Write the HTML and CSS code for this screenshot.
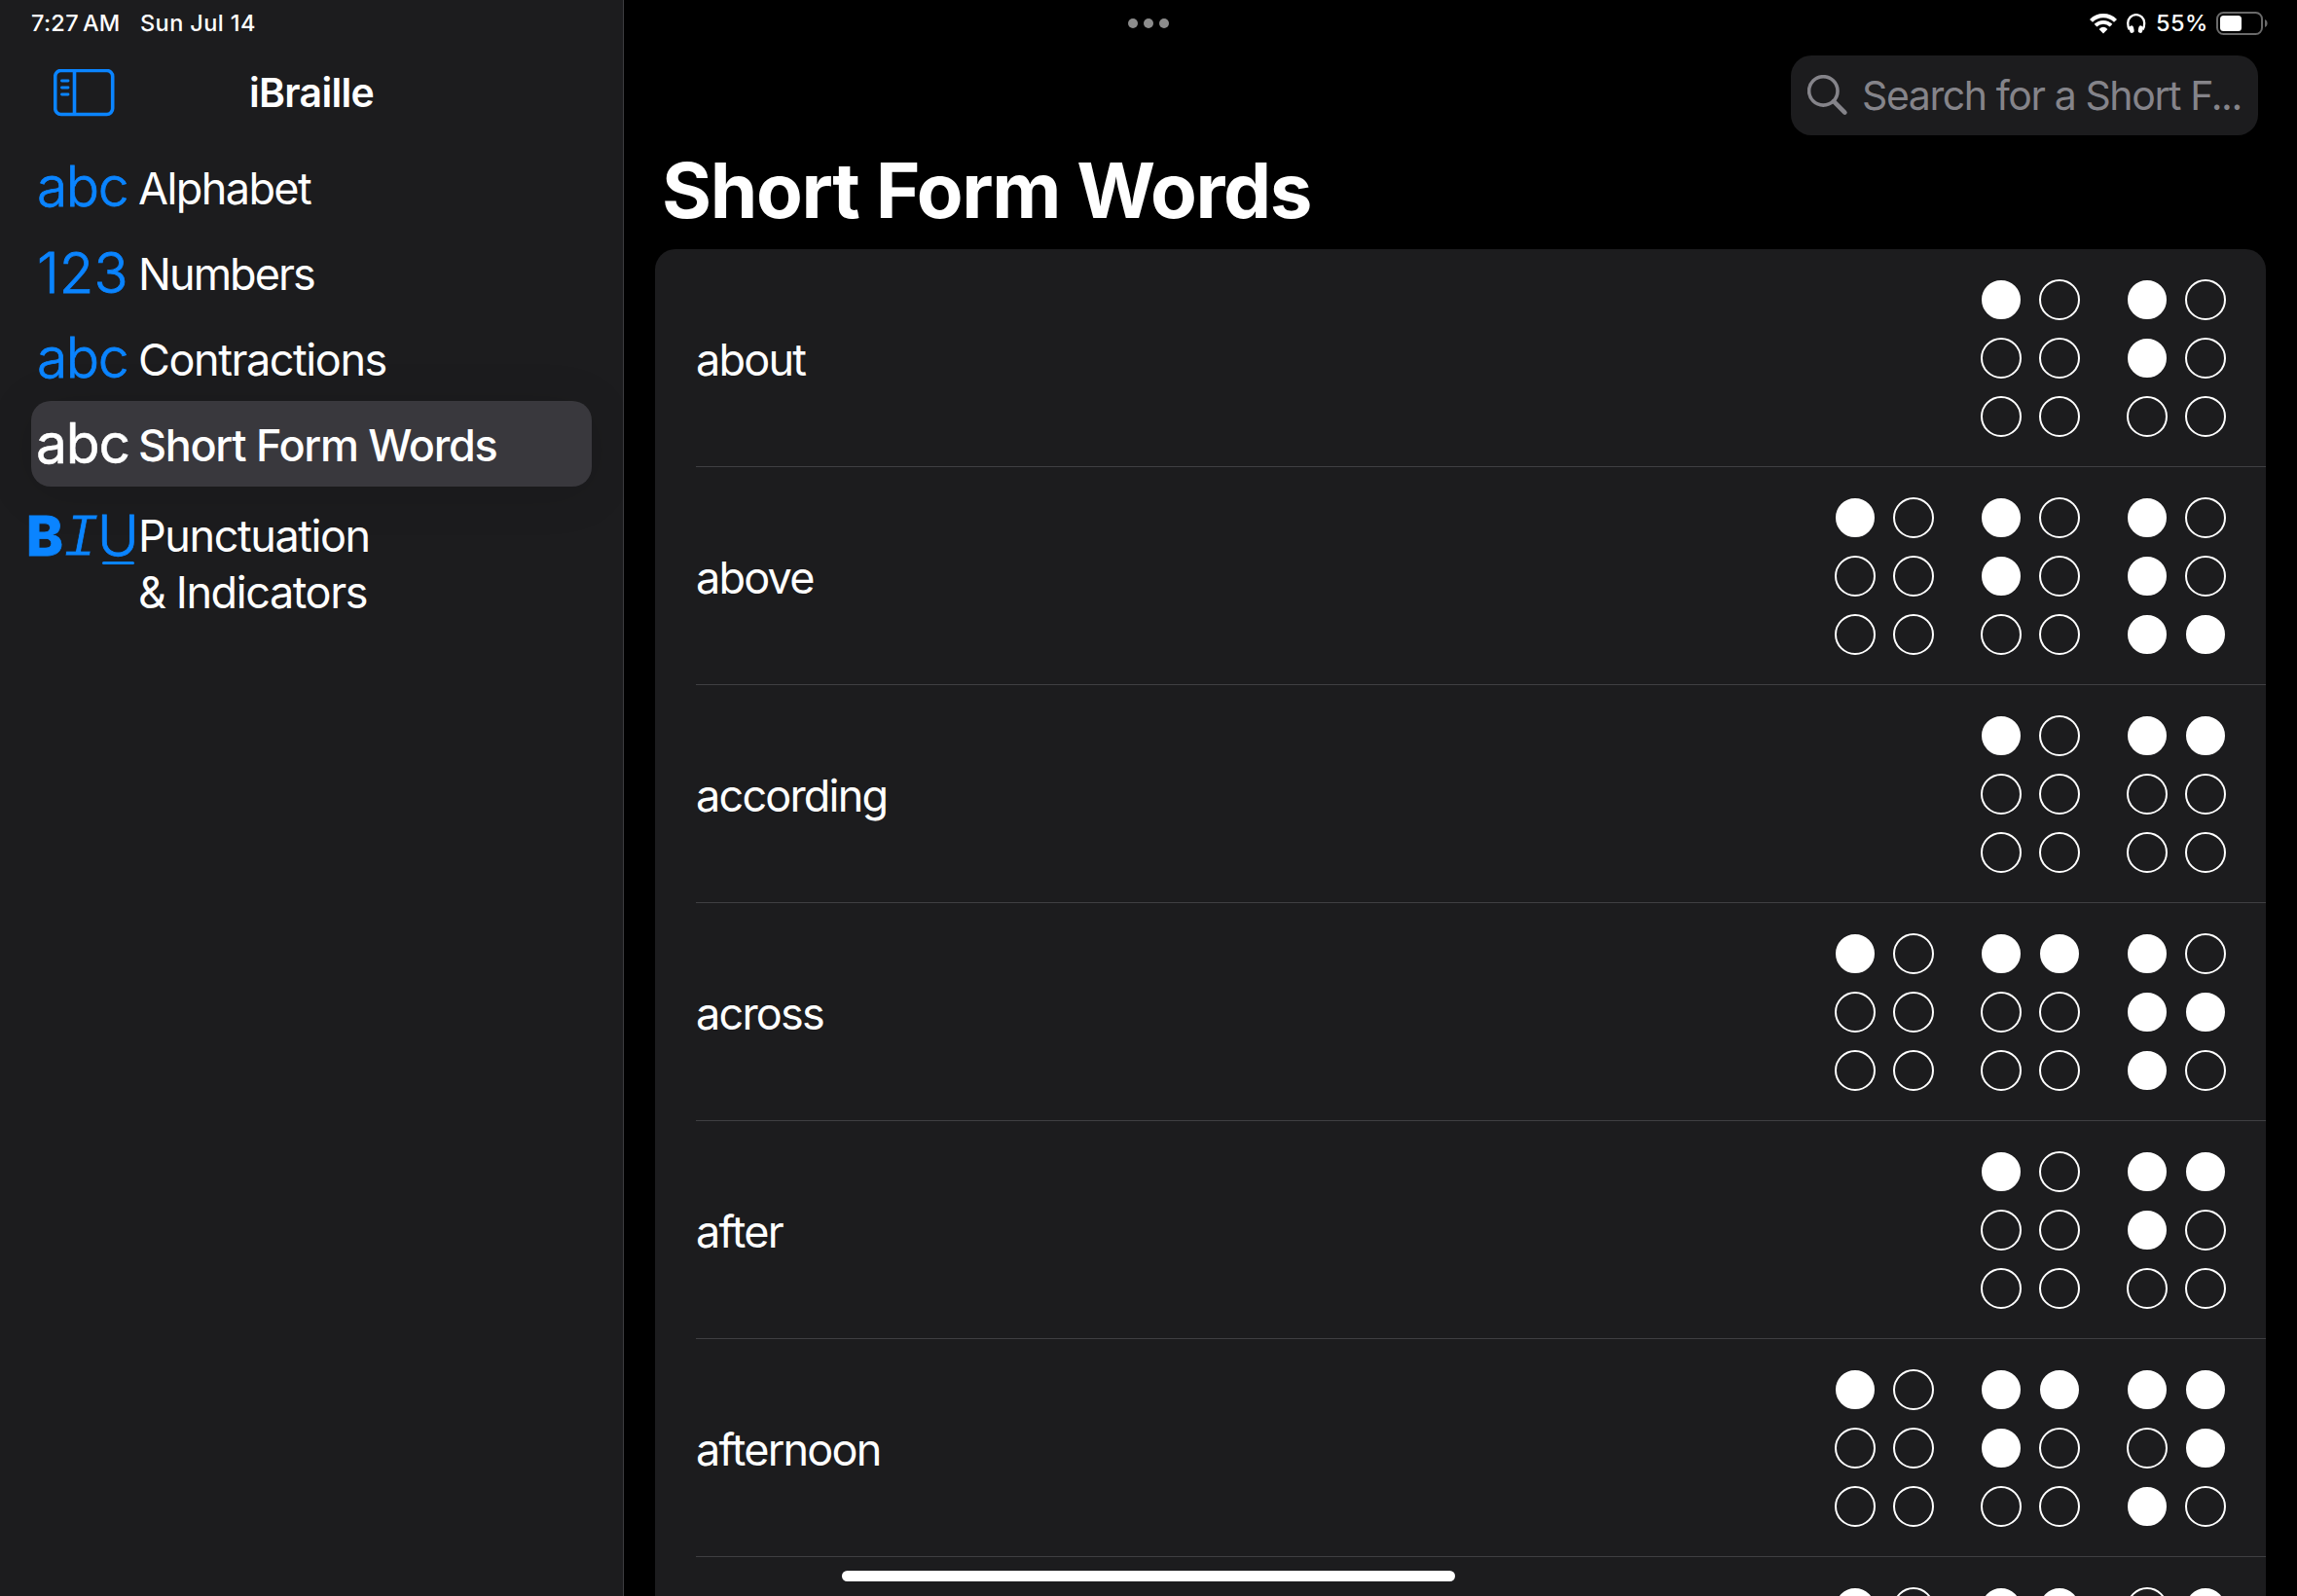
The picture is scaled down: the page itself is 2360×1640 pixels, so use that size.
FILE: index.html
```
<!DOCTYPE html>
<html lang="en">
<head>
<meta charset="utf-8">
<title>iBraille</title>
<link rel="stylesheet" href="styles.css">
</head>
<body>
<div class="app">
  <aside class="sidebar">
    <div class="status status-left">
      <span class="time">7:27<span class="ampm">AM</span></span>
      <span class="date">Sun Jul 14</span>
    </div>
    <header class="sidebar-bar">
      <svg class="toggle" width="64" height="50" viewBox="0 0 64 50" fill="none" stroke="#0a84ff">
        <rect x="1.7" y="1.5" width="59" height="45" rx="6" stroke-width="3.6"/>
        <path d="M21.5 2v45" stroke-width="3.6"/>
        <path d="M8.5 12h6.5M8.5 19h6.5M8.5 26h6.5" stroke-width="2.9" stroke-linecap="round"/>
      </svg>
      <h2 class="app-name">iBraille</h2>
    </header>
    <nav class="menu">
      <a class="item"><span class="glyph abc">abc</span><span class="label alphabet">Alphabet</span></a>
      <a class="item"><span class="glyph num">123</span><span class="label numbers">Numbers</span></a>
      <a class="item"><span class="glyph abc">abc</span><span class="label">Contractions</span></a>
      <a class="item selected"><span class="glyph abc">abc</span><span class="label">Short Form Words</span></a>
      <a class="item tall"><span class="glyph biu"><b>B</b><i>I</i><u>U</u></span><span class="label">Punctuation<br>&amp; Indicators</span></a>
    </nav>
  </aside>

  <main class="detail">
    <div class="status status-right">
      <span class="multitask"><span></span><span></span><span></span></span>
      <span class="indicators">
        <svg class="wifi" width="28" height="21" viewBox="0 0 28 21" fill="none" stroke="#fff">
          <path d="M1.5 7.4A17.5 17.5 0 0 1 26.5 7.4" stroke-width="4.2"/>
          <path d="M6 12.2A11.2 11.2 0 0 1 22 12.2" stroke-width="3.8"/>
          <path d="M14 20.4L9.6 16Q14 11.7 18.4 16Z" fill="#fff" stroke="none"/>
        </svg>
        <svg class="phones" width="20" height="21" viewBox="0 0 20 21" fill="none" stroke="#fff">
          <path d="M2.8 16.5C1.6 14.5 1.2 12.3 1.2 9.8A8.4 8.6 0 0 1 18.2 9.8C18.2 12.3 17.8 14.5 16.6 16.5" stroke-width="2.3"/>
          <path d="M4.8 14.7L5.4 17.6M14.6 14.7L14 17.6" stroke-width="4.6" stroke-linecap="round"/>
        </svg>
        <span class="percent">55%</span>
        <svg class="battery" width="54" height="24" viewBox="0 0 54 24">
          <rect x="1" y="1" width="46" height="22" rx="6.5" fill="none" stroke="#6a6a6a" stroke-width="2"/>
          <rect x="4" y="4" width="22" height="16" rx="3.5" fill="#fff"/>
          <path d="M50 8C53.4 9.2 53.4 14.8 50 16Z" fill="#6a6a6a"/>
        </svg>
      </span>
    </div>
    <div class="toolbar">
      <div class="search">
        <svg width="42" height="42" viewBox="0 0 42 42" fill="none" stroke="#85848a">
          <circle cx="16.3" cy="16.4" r="14.7" stroke-width="3.6"/>
          <path d="M27 27.2L38.4 38.6" stroke-width="4.6" stroke-linecap="round"/>
        </svg>
        <span>Search for a Short F...</span>
      </div>
    </div>
    <h1 class="title">Short Form Words</h1>
    <section class="card" id="words"></section>
  </main>
  <div class="home-indicator"></div>
</div>
<script src="words.js"></script>
</body>
</html>
```
FILE: styles.css
```
* { box-sizing: border-box; }

body {
  margin: 0;
  background: #000;
  color: #fff;
  font-family: Inter, "Liberation Sans", sans-serif;
}

.app {
  position: relative;
  display: flex;
  width: 2360px;
  height: 1640px;
  overflow: hidden;
}

/* Sidebar */
.sidebar {
  flex: none;
  width: 641px;
  background: #1c1c1e;
  border-right: 1px solid #3d3d40;
}

.status {
  display: flex;
  align-items: center;
  height: 48px;
  font-size: 23.5px;
  font-weight: 500;
  line-height: 28px;
  white-space: nowrap;
}

.status-left { padding-left: 32px; height: 47px; }
.time { width: 112px; letter-spacing: 0.3px; }
.ampm { margin-left: 4px; }
.date { letter-spacing: 0.41px; }

.sidebar-bar {
  display: flex;
  align-items: center;
  height: 101px;
  padding: 1px 0 4px 55px;
}

.toggle { flex: none; display: block; }

.app-name {
  margin: -2px 0 0 137px;
  font-size: 41px;
  font-weight: 600;
  letter-spacing: -0.7px;
}

.menu { padding: 0 32px; }

.item {
  display: flex;
  align-items: center;
  height: 88px;
  border-radius: 20px;
  font-size: 45px;
  letter-spacing: -1.43px;
  white-space: nowrap;
}

.label { padding-top: 2px; }

.glyph {
  flex: none;
  width: 110px;
  padding-left: 6px;
  color: #0a84ff;
  font-weight: 300;
  line-height: 88px;
  -webkit-text-stroke: 0.8px currentColor;
}

.abc { font-size: 57px; letter-spacing: -1.5px; }
.num { font-size: 58px; letter-spacing: 0; }
.alphabet { letter-spacing: -1.6px; }
.numbers { letter-spacing: -1.94px; }

.selected {
  background: #39383d;
  font-weight: 500;
  letter-spacing: -1.32px;
  box-shadow: 0 6px 50px rgba(0, 0, 0, 0.12);
}

.selected .glyph {
  padding-left: 5px;
  color: #fff;
  font-weight: 400;
  letter-spacing: -1.2px;
  -webkit-text-stroke-width: 0.5px;
}

.tall {
  align-items: flex-start;
  height: 156px;
  padding-top: 20px;
  line-height: 58px;
}

.biu {
  display: flex;
  width: 115px;
  margin-left: -5px;
  padding: 0;
  font-size: 58px;
  letter-spacing: 0;
  line-height: 61px;
}

.biu b { width: 39px; font-size: 57px; font-weight: 800; }

.biu i {
  width: 35px;
  margin-left: -1px;
  margin-right: 1px;
  padding-top: 4px;
  font-family: "Liberation Mono", monospace;
  font-size: 63px;
  font-weight: 400;
  -webkit-text-stroke: 0.8px #1c1c1e;
}

.biu u { position: relative; text-decoration: none; }

.biu u::after {
  content: "";
  position: absolute;
  left: 5px;
  top: 57px;
  width: 33px;
  height: 3px;
  border-radius: 2px;
  background: #0a84ff;
}

/* Detail pane */
.detail {
  display: flex;
  flex-direction: column;
  width: 1719px;
  padding: 0 32px;
}

.status-right {
  flex: none;
  justify-content: space-between;
  margin-right: -3px;
}

.multitask { display: flex; gap: 6px; margin-left: 486px; }
.multitask span { width: 10px; height: 10px; border-radius: 50%; background: #8c8c8c; }

.indicators { display: flex; align-items: center; }
.phones { margin-left: 10px; }
.percent { width: 62px; height: 29px; margin-left: 10px; letter-spacing: 0.5px; }

.toolbar {
  flex: none;
  display: flex;
  justify-content: flex-end;
  padding: 9px 8px 0 0;
}

.search {
  display: flex;
  align-items: center;
  width: 480px;
  height: 82px;
  padding-left: 17px;
  gap: 14px;
  border-radius: 21px;
  background: #1c1c1e;
  color: #85848a;
  font-size: 41px;
  letter-spacing: -1.4px;
  white-space: nowrap;
}

.title {
  flex: none;
  height: 117px;
  margin: 0;
  padding-left: 7px;
  font-size: 78px;
  font-weight: 700;
  line-height: 114px;
  letter-spacing: -1.35px;
}

.card {
  flex: none;
  border-radius: 21px;
  background: #1c1c1e;
}

.row {
  display: flex;
  align-items: center;
  justify-content: space-between;
  height: 224px;
  margin-left: 42px;
  padding: 1px 42px 0 0;
  border-bottom: 1px solid #3f3f42;
}

.word { padding-top: 2px; font-size: 45px; letter-spacing: -1.8px; }
.cells { display: flex; gap: 50px; margin-left: auto; }

.cell {
  display: grid;
  grid-template: repeat(3, 40px) / repeat(2, 40px);
  gap: 20px;
}

.dot {
  margin: -1px;
  border: 2px solid #fff;
  border-radius: 50%;
}

.dot.on { margin: 0; background: #fff; }

.home-indicator {
  position: absolute;
  left: 865px;
  top: 1614px;
  width: 630px;
  height: 11px;
  border-radius: 6px;
  background: #fff;
}
```
FILE: words.js
```
// Each braille cell is the list of its raised dots: 1-3 down the left, 4-6 down the right.
const words = [
  ["about", ["1", "12"]],
  ["above", ["1", "12", "1236"]],
  ["according", ["1", "14"]],
  ["across", ["1", "14", "1235"]],
  ["after", ["1", "124"]],
  ["afternoon", ["1", "124", "1345"]],
  ["", ["1", "124", "2456"]]
];

const gridOrder = "142536";

document.getElementById("words").innerHTML = words.map(([word, cells]) =>
  `<div class="row">${word ? `<span class="word">${word}</span>` : ""}<div class="cells">${
    cells.map(cell => `<div class="cell">${
      [...gridOrder].map(d => `<span class="dot${cell.includes(d) ? " on" : ""}"></span>`).join("")
    }</div>`).join("")
  }</div></div>`
).join("");
```
